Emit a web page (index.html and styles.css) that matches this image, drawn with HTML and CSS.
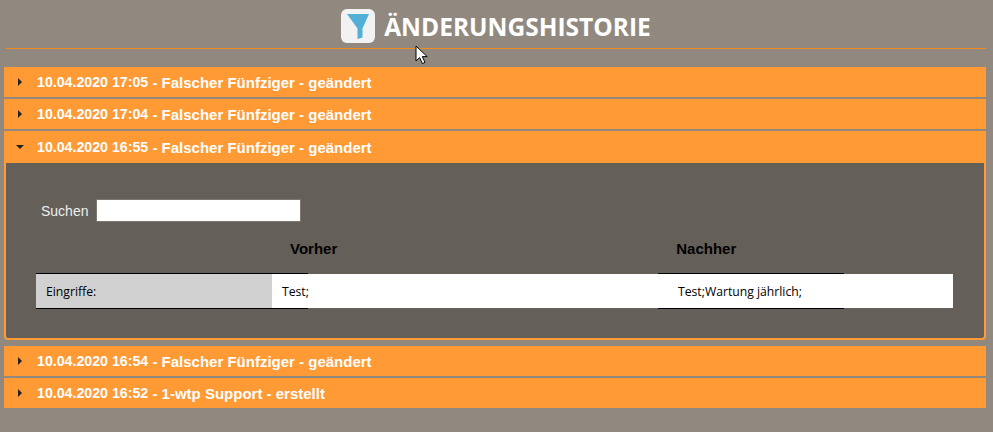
FILE: index.html
```html
<!DOCTYPE html>
<html lang="de">
<head>
  <meta charset="UTF-8">
  <title>Änderungshistorie</title>
  <link rel="stylesheet" href="styles.css">
</head>
<body>

  <div class="page-title">
    <span class="title-icon">
      <svg width="22" height="25" viewBox="0 0 22 25">
        <path d="M0 0H22L15.5 14.5V23.5L10.5 25V14.5Z" fill="#52b0d6"/>
      </svg>
    </span>
    <h1>ÄNDERUNGSHISTORIE</h1>
  </div>

  <div class="history">
    <div class="entry-head"><span class="arrow-right"></span><span class="entry-date">10.04.2020 17:05</span>&nbsp;- Falscher Fünfziger - geändert</div>
    <div class="entry-head"><span class="arrow-right"></span><span class="entry-date">10.04.2020 17:04</span>&nbsp;- Falscher Fünfziger - geändert</div>

    <div class="entry-open">
      <div class="entry-head"><span class="arrow-down"></span><span class="entry-date">10.04.2020 16:55</span>&nbsp;- Falscher Fünfziger - geändert</div>
      <div class="entry-body">
        <div class="search-row">
          <label for="search">Suchen</label>
          <input type="text" id="search">
        </div>

        <div class="compare-head">
          <span class="col-before">Vorher</span>
          <span class="col-after">Nachher</span>
        </div>

        <div class="compare-row">
          <div class="cell-label">Eingriffe:</div>
          <div class="cell-before">Test;</div>
          <div class="cell-gap"></div>
          <div class="cell-after">Test;Wartung jährlich;</div>
          <div class="cell-rest"></div>
        </div>
      </div>
    </div>

    <div class="entry-head"><span class="arrow-right"></span><span class="entry-date">10.04.2020 16:54</span>&nbsp;- Falscher Fünfziger - geändert</div>
    <div class="entry-head"><span class="arrow-right"></span><span class="entry-date">10.04.2020 16:52</span>&nbsp;- 1-wtp Support - erstellt</div>
  </div>

  <svg class="cursor" width="14" height="20" viewBox="0 0 14 20">
    <path d="M1 1V16L4.6 12.6L7.4 18.6L10 17.4L7.3 11.6H12.2Z" fill="#fff" stroke="#000" stroke-width="1"/>
  </svg>

</body>
</html>
```

FILE: styles.css
```css
html, body {
  height: 100%;
}

body {
  margin: 0;
  overflow: hidden;
  background-color: #91897f;
  font-family: "Liberation Sans", Arial, sans-serif;
}

.page-title {
  display: flex;
  justify-content: center;
  align-items: center;
  gap: 9px;
  height: 48px;
  margin: 0 7px 0 6px;
  border-bottom: 1px solid #f28c1e;
  box-sizing: content-box;
}

.page-title h1 {
  margin: 4px 0 0;
  font-family: "Open Sans", sans-serif;
  font-size: 24.5px;
  font-weight: 700;
  color: #fff;
}

.title-icon {
  display: flex;
  justify-content: center;
  align-items: center;
  width: 34px;
  height: 34px;
  margin-top: 4px;
  background-color: #f2f2f2;
  border-radius: 6px;
}

.history {
  margin: 18px 7px 0 4px;
}

.entry-head {
  display: flex;
  align-items: center;
  height: 30px;
  margin-bottom: 2px;
  padding-left: 33px;
  background-color: #ff9a35;
  color: #fff;
  font-size: 15px;
  font-weight: bold;
  position: relative;
}

.entry-date {
  font-size: 14.2px;
}

.arrow-right, .arrow-down {
  position: absolute;
  width: 0;
  height: 0;
}

.arrow-right {
  left: 14px;
  top: 11px;
  border-left: 4px solid #222;
  border-top: 4px solid transparent;
  border-bottom: 4px solid transparent;
}

.arrow-down {
  left: 12px;
  top: 14px;
  border-top: 4px solid #222;
  border-left: 4px solid transparent;
  border-right: 4px solid transparent;
}

.entry-open {
  margin-bottom: 6px;
}

.entry-open .entry-head {
  height: 32px;
  margin-bottom: 0;
}

.entry-body {
  height: 177px;
  box-sizing: border-box;
  padding: 36px 30px 0;
  background-color: #655f5a;
  border: 2px solid #ff9a35;
  border-top: none;
  border-radius: 0 0 4px 4px;
}

.search-row {
  display: flex;
  align-items: center;
  gap: 8px;
  padding-left: 5px;
  color: #eee;
  font-size: 14px;
}

.search-row input {
  width: 205px;
  height: 23px;
  box-sizing: border-box;
  padding: 0 4px;
  background-color: #fff;
  border: 1px solid #7d7770;
}

.compare-head {
  display: flex;
  height: 16px;
  margin-top: 18px;
  color: #000;
  font-size: 15px;
  font-weight: bold;
}

.col-before {
  margin-left: 254px;
}

.col-after {
  margin-left: 339px;
}

.compare-row {
  display: flex;
  height: 36px;
  margin-top: 17px;
  font-family: "Open Sans", sans-serif;
  font-size: 12.2px;
  color: #000;
}

.compare-row > div {
  display: flex;
  align-items: center;
  box-sizing: border-box;
}

.cell-label, .cell-before, .cell-after {
  border-top: 1px solid #000;
  border-bottom: 1px solid #000;
}

.cell-label {
  width: 236px;
  padding-left: 10px;
  background-color: #d1d1d1;
}

.cell-before {
  position: relative;
  z-index: 1;
  width: 36px;
  padding-left: 10px;
  background-color: #fff;
  white-space: nowrap;
}

.cell-gap {
  width: 350px;
  height: 34px;
  margin-top: 1px;
  background-color: #fff;
}

.cell-after {
  width: 186px;
  padding-left: 20px;
  background-color: #fff;
  white-space: nowrap;
}

.cell-rest {
  width: 109px;
  height: 34px;
  margin-top: 1px;
  background-color: #fff;
}

.cursor {
  position: absolute;
  left: 415px;
  top: 45px;
}
```
